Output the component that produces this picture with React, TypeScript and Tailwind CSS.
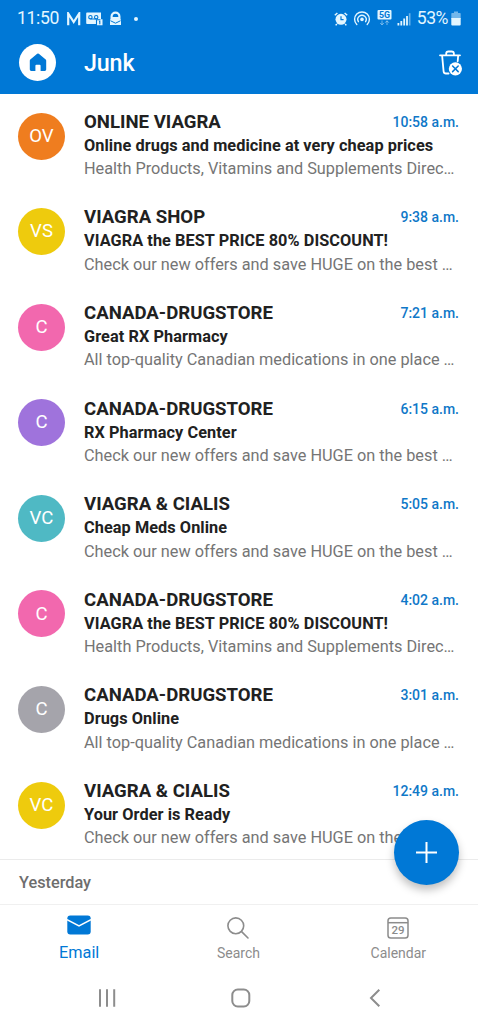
import { clsx } from 'clsx';

interface Message {
  initials: string;
  color: string;
  sender: string;
  subject: string;
  preview: string;
  time: string;
}

const HEALTH = 'Health Products, Vitamins and Supplements Direc…';
const OFFERS = 'Check our new offers and save HUGE on the best …';
const CANADIAN = 'All top-quality Canadian medications in one place …';

const messages: Message[] = [
  { initials: 'OV', color: 'bg-[#ef7d1f]', sender: 'ONLINE VIAGRA', subject: 'Online drugs and medicine at very cheap prices', preview: HEALTH, time: '10:58 a.m.' },
  { initials: 'VS', color: 'bg-[#eecb0d]', sender: 'VIAGRA SHOP', subject: 'VIAGRA the BEST PRICE 80% DISCOUNT!', preview: OFFERS, time: '9:38 a.m.' },
  { initials: 'C', color: 'bg-[#f268ae]', sender: 'CANADA-DRUGSTORE', subject: 'Great RX Pharmacy', preview: CANADIAN, time: '7:21 a.m.' },
  { initials: 'C', color: 'bg-[#9f73dc]', sender: 'CANADA-DRUGSTORE', subject: 'RX Pharmacy Center', preview: OFFERS, time: '6:15 a.m.' },
  { initials: 'VC', color: 'bg-[#4fb9c4]', sender: 'VIAGRA & CIALIS', subject: 'Cheap Meds Online', preview: OFFERS, time: '5:05 a.m.' },
  { initials: 'C', color: 'bg-[#f268ae]', sender: 'CANADA-DRUGSTORE', subject: 'VIAGRA the BEST PRICE 80% DISCOUNT!', preview: HEALTH, time: '4:02 a.m.' },
  { initials: 'C', color: 'bg-[#a5a4ab]', sender: 'CANADA-DRUGSTORE', subject: 'Drugs Online', preview: CANADIAN, time: '3:01 a.m.' },
  { initials: 'VC', color: 'bg-[#eecb0d]', sender: 'VIAGRA & CIALIS', subject: 'Your Order is Ready', preview: OFFERS, time: '12:49 a.m.' },
];

function StatusBar() {
  return (
    <div className="flex h-[37px] items-center pl-[17px] pr-[17px] text-[#e3f6ff]">
      <span className="w-[49px] text-[17.6px] leading-[37px] tracking-[-0.35px]">11:50</span>
      {/* Gmail */}
      <svg className="h-[14px] w-[15px]" viewBox="0 0 15 14" fill="none" stroke="currentColor">
        <path d="M2.2 13.2V1.5L7.7 10L13.2 1.5V13.2" strokeWidth="2.2" />
      </svg>
      {/* Voicemail */}
      <svg className="ml-[5px] h-[14px] w-[17px]" viewBox="0 0 17 14">
        <path fill="currentColor" d="M1 .5h14v6.8h1.5v6H11V12H1Q.2 12 .2 11V1.5Q.2.5 1 .5z" />
        <g fill="none" stroke="#0078d6" strokeWidth="1.1">
          <circle cx="4.4" cy="5.2" r="1.7" />
          <circle cx="10.2" cy="5.2" r="1.7" />
          <path d="M4.4 7h5.8M10.5 13.3V7.8h4M13 9.3h.8v3" />
        </g>
      </svg>
      <svg className="ml-[6px] h-[15px] w-[13px]" viewBox="0 0 13 15">
        <path fill="currentColor" d="M1.5 8V5.5a5 5 0 0 1 10 0V8L12 9v5H1V9z" />
        <path fill="#0078d6" d="M3.7 5.5a2.8 2.8 0 0 1 5.6 0v.6H3.7z" />
        <path fill="none" stroke="#0078d6" d="M1.4 9.7l5.1 2.5 5.1-2.5" />
      </svg>
      <span className="ml-[12px] size-[4px] rounded-full bg-current" />

      {/* Alarm */}
      <svg className="ml-auto h-[14px] w-[14px]" viewBox="0 0 14 14" fill="none" stroke="currentColor">
        <circle cx="7" cy="7.3" r="5.5" fill="currentColor" stroke="none" />
        <path d="M.8 3.3L3.4 1M13.2 3.3L10.6 1M2.8 12L1.7 13.4M11.2 12l1.1 1.4" strokeWidth="1.5" />
        <path d="M7 4.2v3.4h2.6" stroke="#0078d6" strokeWidth="1.2" />
      </svg>
      {/* Hotspot */}
      <svg className="ml-[5px] h-[15px] w-[18px]" viewBox="0 0 18 15" fill="none" stroke="currentColor" strokeWidth="1.4" strokeLinecap="round">
        <circle cx="9" cy="8.4" r="1.8" fill="currentColor" stroke="none" />
        <path d="M5.4 10.7a4.2 4.2 0 1 1 7.2 0M3.8 13.6a7.4 7.4 0 1 1 10.4 0" />
      </svg>
      {/* 5G */}
      <svg className="mb-[2px] ml-[6px] h-[16px] w-[15px]" viewBox="0 0 15 16">
        <rect x=".5" y="0" width="14" height="9.5" rx="1" fill="currentColor" />
        <text x="7.5" y="8" textAnchor="middle" fontSize="8.8" fontWeight="700" fill="#0078d6">5G</text>
        <path d="M5 10.5v4.2M3.2 13L5 14.9 6.8 13M10 15v-4.2M8.2 12.7L10 10.8l1.8 1.9" fill="none" stroke="currentColor" opacity=".5" />
      </svg>
      {/* Signal */}
      <svg className="ml-[5px] h-[14px] w-[14px]" viewBox="0 0 14 14" fill="currentColor">
        <path d="M.5 11h1.8v2.5H.5zM3.4 9h1.8v4.5H3.4zM6.3 6.5h1.8v7H6.3zM9.1 4h1.8v9.5H9.1z" />
        <path d="M11.8 1.2h1.7v12.3h-1.7z" opacity=".45" />
      </svg>
      <span className="ml-[6px] text-[17.6px] tracking-[-0.5px]">53%</span>
      {/* Battery */}
      <svg className="ml-[3px] h-[15px] w-[10px]" viewBox="0 0 10 15" fill="currentColor">
        <path d="M3 .5h4V2h2q.7 0 .7.8V8H.3V2.8Q.3 2 1 2h2z" opacity=".5" />
        <path d="M.3 7h9.4v6.5q0 1-1 1H1.3q-1 0-1-1z" />
      </svg>
    </div>
  );
}

function Header() {
  return (
    <header className="h-[94px] shrink-0 bg-[#0078d6]">
      <StatusBar />
      <div className="flex h-[51px] items-center pl-[19px] pr-[15px]">
        <div className="flex size-[37px] items-center justify-center rounded-full bg-white">
          <svg className="h-[19px] w-[18px]" viewBox="0 0 18 19" fill="#0078d6">
            <path d="M8.2.8q.8-.7 1.6 0L16.7 6.5q.5.5.5 1.2V16.6q0 1.4-1.4 1.4H11.6V12.8q0-1-1-1H7.4q-1 0-1 1V18H2.2Q.8 18 .8 16.6V7.7q0-.7.5-1.2z" />
          </svg>
        </div>
        <h1 className="ml-[28px] text-[23.3px] leading-[30px] font-medium tracking-[-0.15px] text-white">Junk</h1>
        <svg className="ml-auto h-[26px] w-[24px]" viewBox="0 0 24 26" fill="none" stroke="white" strokeWidth="1.8" strokeLinecap="round">
          <path d="M1 5.3h20M7.2 5V3.8Q7.2 1.5 9.5 1.5h3.1q2.3 0 2.3 2.3V5M3.1 5.3l1.5 16q.2 2.2 2.4 2.2h2.6M19.2 5.3l-.5 6" />
          <circle cx="16.4" cy="18.8" r="6.6" fill="white" stroke="none" />
          <path d="M13.6 16l5.6 5.6M19.2 16l-5.6 5.6" stroke="#0078d6" strokeWidth="1.5" />
        </svg>
      </div>
    </header>
  );
}

function MessageRow({ message }: { message: Message }) {
  return (
    <li className="flex h-[95.6px] pl-[18px] pr-[19px]">
      <div className={clsx('mt-[18.5px] flex size-[47px] shrink-0 items-center justify-center rounded-full pt-px text-[18.6px] text-white', message.color)}>
        {message.initials}
      </div>
      <div className="ml-[19px] min-w-0 flex-1 pt-[15.8px]">
        <div className="flex h-6 items-center justify-between">
          <span className="text-[18.6px] leading-6 font-bold text-[#212121]">{message.sender}</span>
          <span className="text-[14px] leading-6 font-medium text-[#0f78c8]">{message.time}</span>
        </div>
        <p className="text-[16.3px] leading-[23.5px] font-bold tracking-[0.07px] whitespace-nowrap text-[#212121]">{message.subject}</p>
        <p className="text-[16.3px] leading-[23px] whitespace-nowrap text-[#757575]">{message.preview}</p>
      </div>
    </li>
  );
}

function TabBar() {
  return (
    <nav className="grid h-[68px] grid-cols-3 border-t border-[#f0f0f0] text-[14px] text-[#8c8c8c]">
      <div className="flex flex-col items-center pt-[10px] pr-px">
        <svg className="h-[20px] w-[24px]" viewBox="0 0 24 20">
          <rect x=".3" y=".5" width="23.4" height="19" rx="3" fill="#0078d6" />
          <path d="M0 4.6l12 6.3 12-6.3" fill="none" stroke="white" strokeWidth="1.5" />
        </svg>
        <span className="mt-[6px] text-[16.3px] leading-6 text-[#0078d6]">Email</span>
      </div>
      <div className="flex flex-col items-center pt-[11px] pr-px">
        <svg className="h-[24px] w-[24px]" viewBox="0 0 24 24" fill="none" stroke="currentColor" strokeWidth="1.6" strokeLinecap="round">
          <circle cx="9.8" cy="9.8" r="7.9" />
          <path d="M15.6 15.6L22 22" />
        </svg>
        <span className="mt-px leading-6">Search</span>
      </div>
      <div className="flex flex-col items-center pt-[12px]">
        <svg className="h-[22px] w-[22px]" viewBox="0 0 22 22" fill="none" stroke="currentColor" strokeWidth="1.5">
          <rect x="1" y="1" width="20" height="20" rx="2.8" />
          <path d="M1 5.7h20" />
          <text x="11" y="17.3" textAnchor="middle" fontSize="11.5" fontWeight="500" fill="currentColor" stroke="none">29</text>
        </svg>
        <span className="mt-[2px] leading-6">Calendar</span>
      </div>
    </nav>
  );
}

function SystemNav() {
  return (
    <div className="flex h-[53px] items-start pt-[16px] pl-[97px] text-[#8d8d8d]">
      <svg className="h-[20px] w-[20px]" viewBox="0 0 20 20" fill="none" stroke="currentColor" strokeWidth="2">
        <path d="M3 1.3v17.4M10 1.3v17.4M17.2 1.3v17.4" />
      </svg>
      <svg className="ml-[114px] h-[20px] w-[20px]" viewBox="0 0 20 20" fill="none" stroke="currentColor" strokeWidth="2">
        <rect x="1.3" y="1.5" width="17" height="17" rx="5.5" />
      </svg>
      <svg className="ml-[117px] h-[20px] w-[14px]" viewBox="0 0 14 20" fill="none" stroke="currentColor" strokeWidth="2">
        <path d="M11.3 1.7L3 10l8.3 8.3" />
      </svg>
    </div>
  );
}

export default function App() {
  return (
    <div className="relative flex h-[1025px] w-[478px] flex-col overflow-hidden bg-white font-[Roboto,sans-serif]">
      <Header />
      <ul className="h-[765px] shrink-0">
        {messages.map((message) => (
          <MessageRow key={message.time} message={message} />
        ))}
      </ul>
      <div className="h-[45px] border-t border-[#ebebeb] pl-[19px] text-[16.3px] leading-[46px] font-medium text-[#6e6e6e]">
        Yesterday
      </div>
      <TabBar />
      <SystemNav />

      {/* Compose button floats above the list */}
      <button
        aria-label="Compose"
        className="absolute top-[820px] left-[394px] flex size-[65px] items-center justify-center rounded-full bg-[#0078d6] shadow-[0_5px_8px_rgba(0,0,0,0.25)]"
      >
        <svg className="size-[21px]" viewBox="0 0 21 21" stroke="white" strokeWidth="2">
          <path d="M10.5 0v21M0 10.5h21" />
        </svg>
      </button>
    </div>
  );
}
